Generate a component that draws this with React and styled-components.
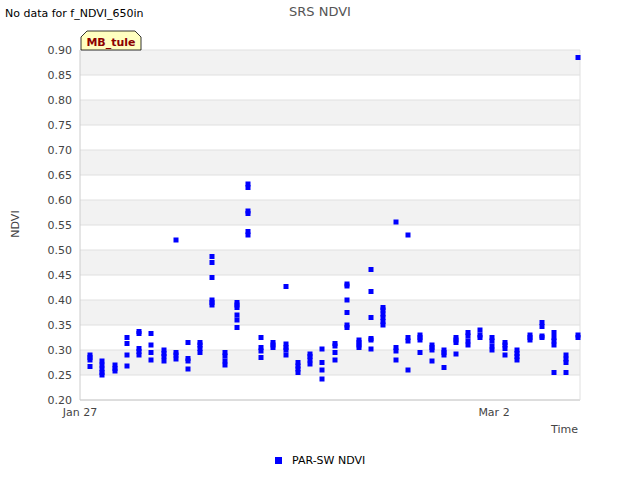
import React from 'react';
import styled, { createGlobalStyle } from 'styled-components';

const Global = createGlobalStyle`
  body { margin: 0; background: #fff; font-family: "DejaVu Sans", sans-serif; }
`;

const Page = styled.div`
  position: relative;
  width: 640px;
  height: 480px;
  overflow: hidden;
`;

const Notice = styled.div`
  position: absolute;
  left: 5px;
  top: 7px;
  font-size: 11px;
  color: #000;
`;

const Chart = styled.svg`
  display: block;
  font-family: "DejaVu Sans", sans-serif;
`;

const X0 = 80, X1 = 580, Y0 = 400;
const yOf = v => Y0 - ((v - 0.2) / 0.05) * 25;

const clusters = [
  [90, [0.267, 0.28, 0.285, 0.29]],
  [102, [0.25, 0.255, 0.262, 0.27, 0.278]],
  [115, [0.258, 0.263, 0.27]],
  [127, [0.268, 0.29, 0.313, 0.325]],
  [139, [0.29, 0.297, 0.303, 0.333, 0.337]],
  [151, [0.28, 0.295, 0.31, 0.333]],
  [164, [0.278, 0.287, 0.293, 0.3]],
  [176, [0.282, 0.29, 0.295, 0.52]],
  [188, [0.262, 0.278, 0.283, 0.315]],
  [200, [0.295, 0.303, 0.31, 0.315]],
  [212, [0.39, 0.395, 0.4, 0.445, 0.475, 0.487]],
  [225, [0.27, 0.278, 0.288, 0.295]],
  [237, [0.345, 0.36, 0.37, 0.385, 0.39, 0.395]],
  [248, [0.53, 0.537, 0.573, 0.578, 0.625, 0.632]],
  [261, [0.285, 0.298, 0.305, 0.325]],
  [273, [0.305, 0.31, 0.315]],
  [286, [0.29, 0.3, 0.305, 0.312, 0.427]],
  [298, [0.255, 0.262, 0.268, 0.275]],
  [310, [0.272, 0.28, 0.287, 0.292]],
  [322, [0.242, 0.26, 0.275, 0.302]],
  [335, [0.28, 0.295, 0.308, 0.313]],
  [347, [0.345, 0.35, 0.375, 0.4, 0.428, 0.432]],
  [359, [0.305, 0.31, 0.315, 0.32]],
  [371, [0.302, 0.32, 0.323, 0.365, 0.417, 0.461]],
  [383, [0.35, 0.357, 0.365, 0.372, 0.38, 0.385]],
  [396, [0.28, 0.298, 0.305, 0.556]],
  [408, [0.26, 0.318, 0.325, 0.53]],
  [420, [0.295, 0.32, 0.325, 0.33]],
  [432, [0.278, 0.3, 0.305, 0.31]],
  [444, [0.265, 0.29, 0.295, 0.3]],
  [456, [0.292, 0.315, 0.32, 0.325]],
  [468, [0.31, 0.318, 0.328, 0.335]],
  [480, [0.325, 0.33, 0.34]],
  [492, [0.3, 0.308, 0.318, 0.325]],
  [505, [0.29, 0.303, 0.31, 0.315]],
  [517, [0.28, 0.287, 0.293, 0.3]],
  [530, [0.32, 0.325, 0.33]],
  [542, [0.325, 0.328, 0.347, 0.355]],
  [554, [0.255, 0.31, 0.318, 0.325, 0.335]],
  [566, [0.255, 0.275, 0.282, 0.29]],
  [578, [0.325, 0.33, 0.885]],
];

const ticks = [];
for (let i = 0; i <= 14; i++) ticks.push(0.2 + i * 0.05);

export default function App() {
  return (
    <Page>
      <Global />
      <Notice>No data for f_NDVI_650in</Notice>
      <Chart width="640" height="480">
        <text x="320" y="16" textAnchor="middle" fontSize="13" fill="#555">SRS NDVI</text>
        {ticks.slice(0, -1).map((t, i) => (
          <rect key={i} x={X0} y={yOf(t + 0.05)} width={X1 - X0} height="25"
            fill={i % 2 === 1 ? '#f2f2f2' : '#fff'} />
        ))}
        {ticks.map((t, i) => (
          <g key={i}>
            <line x1={X0} x2={X1} y1={yOf(t)} y2={yOf(t)} stroke="#e0e0e0" />
            <text x={X0 - 8} y={yOf(t) + 4} textAnchor="end" fontSize="11" fill="#444">{t.toFixed(2)}</text>
          </g>
        ))}
        <line x1={X0} x2={X0} y1="50" y2={Y0} stroke="#ccc" />
        <line x1={X0} x2={X1} y1={Y0} y2={Y0} stroke="#ccc" />
        <line x1={X1} x2={X1} y1="50" y2={Y0} stroke="#e0e0e0" />
        <text x="80" y="416" textAnchor="middle" fontSize="11" fill="#444">Jan 27</text>
        <text x="494" y="416" textAnchor="middle" fontSize="11" fill="#444">Mar 2</text>
        <text x="578" y="433" textAnchor="end" fontSize="11" fill="#444">Time</text>
        <text x="19" y="224" textAnchor="middle" fontSize="11" fill="#444" transform="rotate(-90 19 224)">NDVI</text>
        {clusters.map(([x, vs]) => vs.map((v, j) => (
          <rect key={x + '-' + j} x={x - 2.5} y={yOf(v) - 2.5} width="5" height="5" fill="#0000ff" />
        )))}
        <path d="M81 50 V37 L87 31 H135 L141 37 V50 Z" fill="#ffffc0" stroke="#000" strokeWidth="0.8" />
        <text x="111" y="46" textAnchor="middle" fontSize="11" fontWeight="bold" fill="#8b0000">MB_tule</text>
        <rect x="275" y="457" width="7" height="7" fill="#0000ff" />
        <text x="292" y="464" fontSize="11" fill="#000">PAR-SW NDVI</text>
      </Chart>
    </Page>
  );
}
